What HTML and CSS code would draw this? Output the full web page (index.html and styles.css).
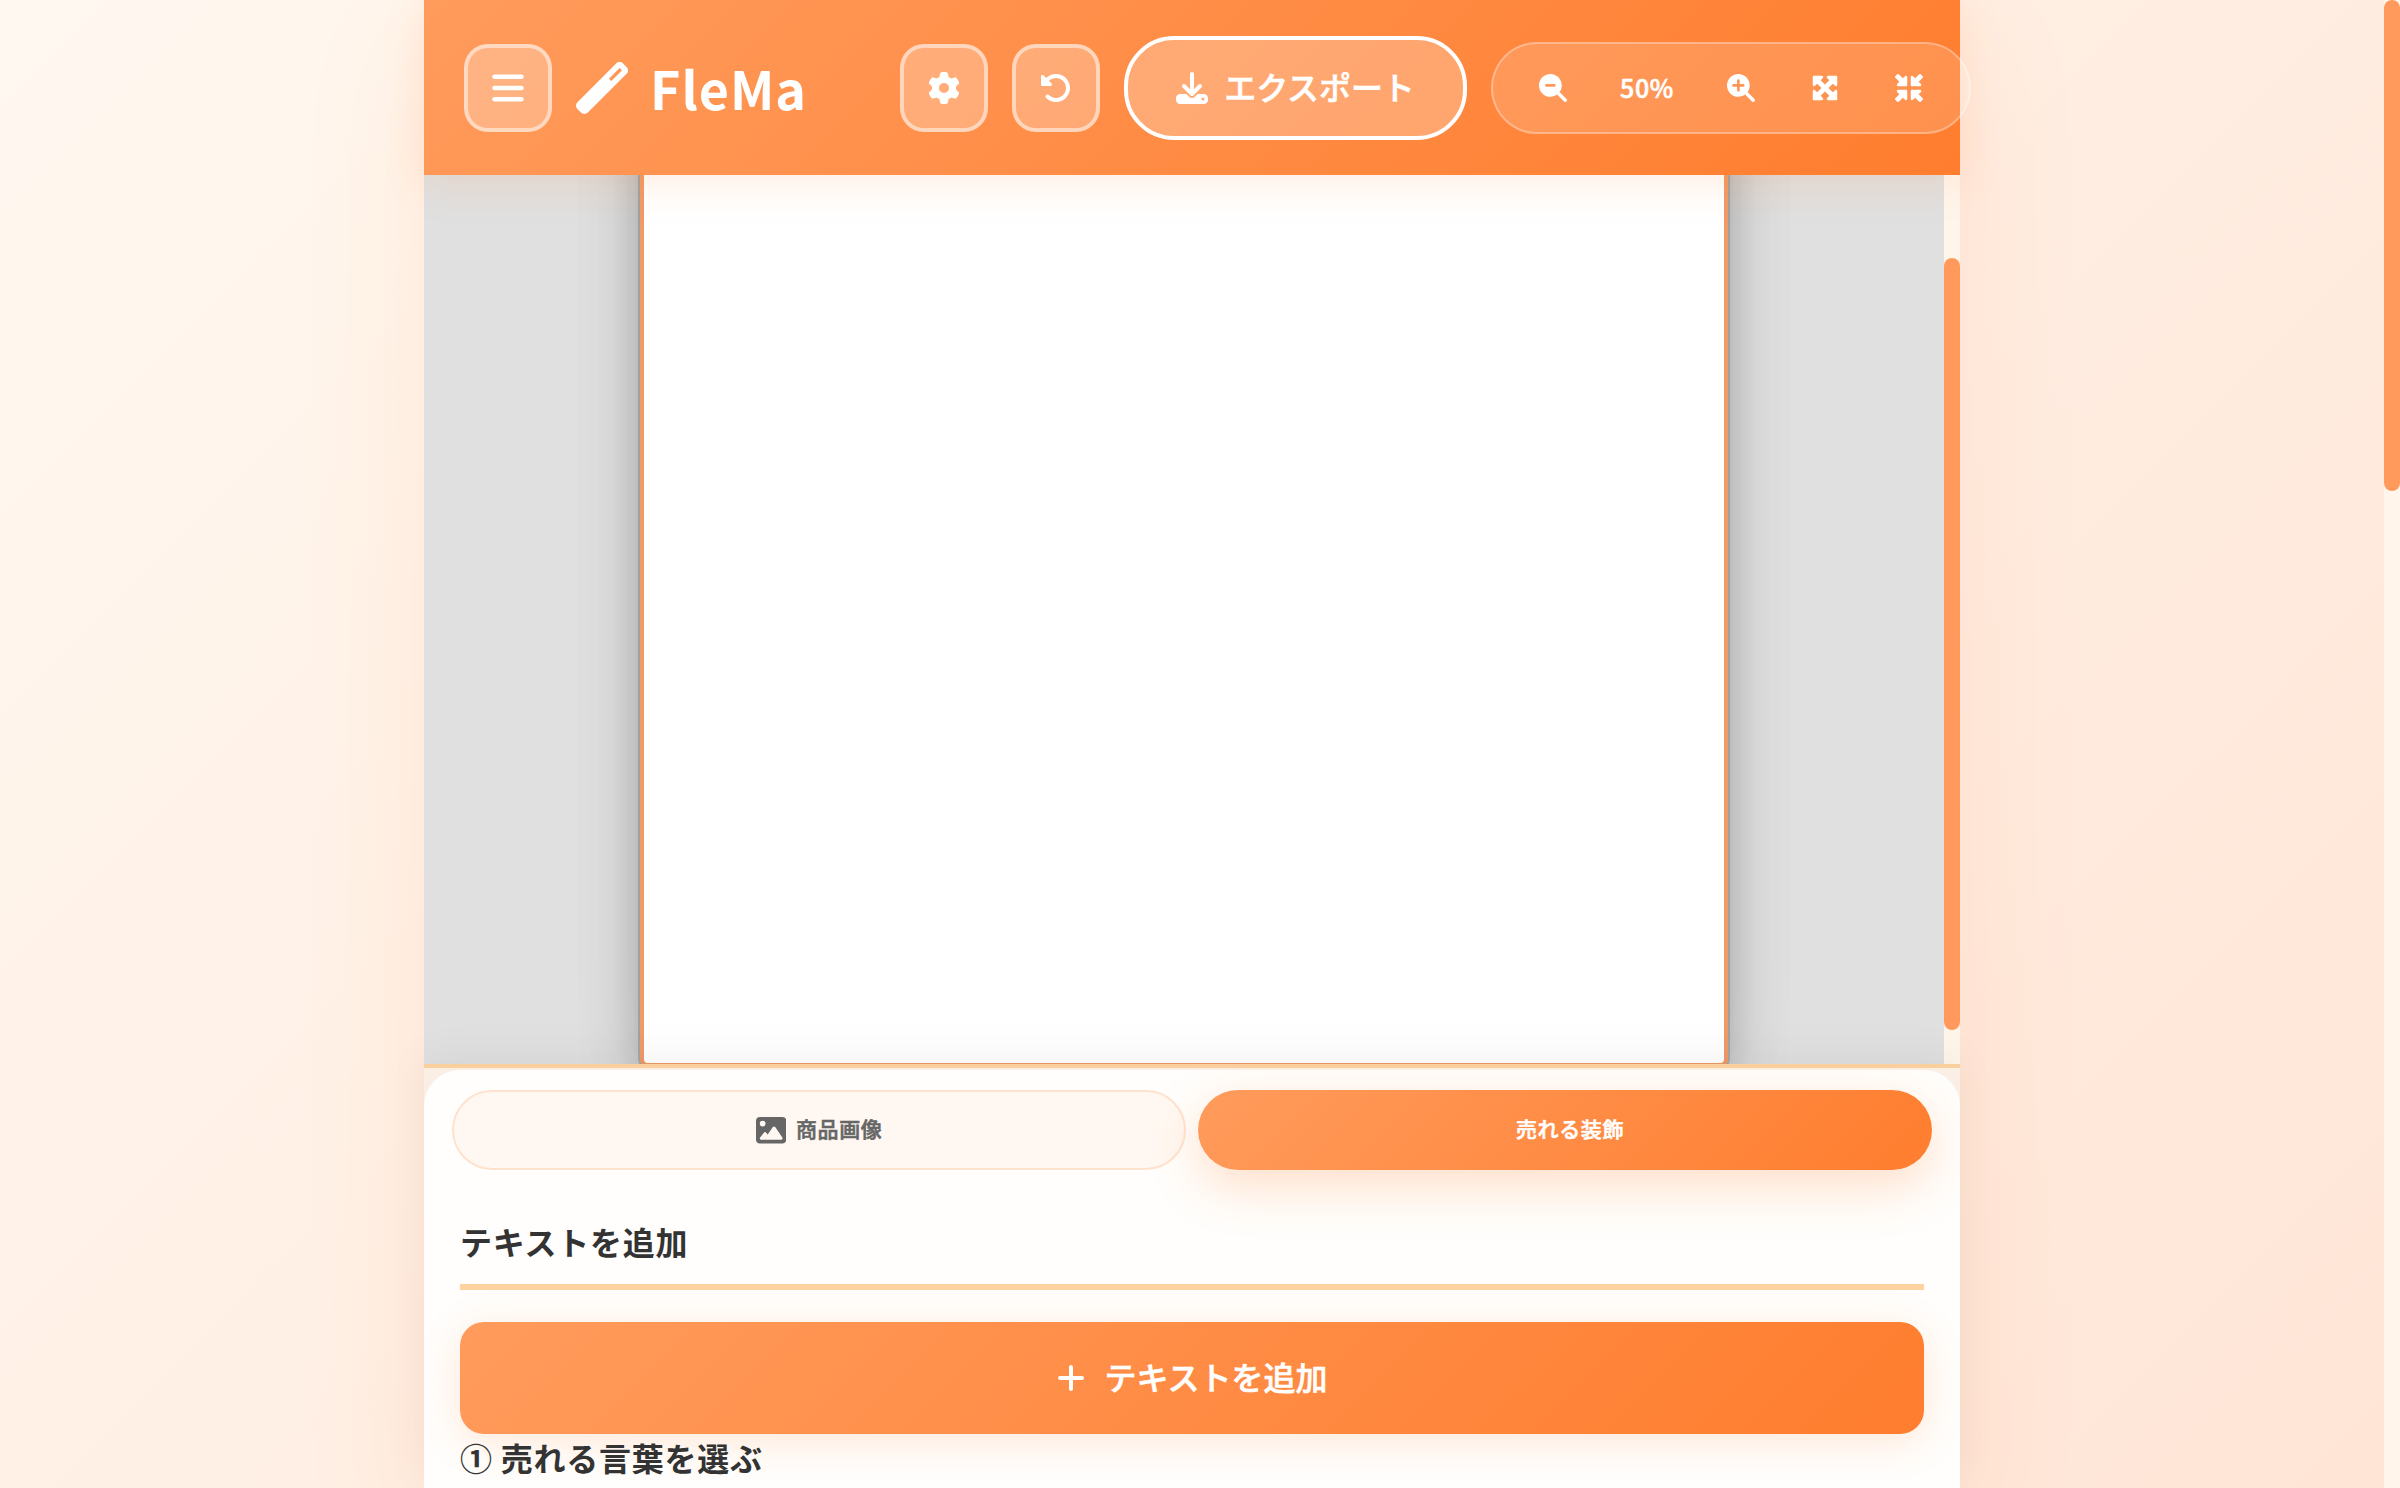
FILE: index.html
```html
<!DOCTYPE html>
<html lang="ja">
<head>
<meta charset="utf-8">
<title>FleMa</title>
<link rel="stylesheet" href="styles.css">
</head>
<body>
<div class="page">
  <div class="app">
    <header class="header">
      <button class="icon-btn" aria-label="メニュー"><svg class="icon icon-36" viewBox="0 0 448 512"><path d="M0 96C0 78.300 14.300 64 32 64H416c17.700 0 32 14.300 32 32s-14.300 32-32 32H32C14.300 128 0 113.700 0 96zM0 256c0-17.700 14.300-32 32-32H416c17.700 0 32 14.300 32 32s-14.300 32-32 32H32c-17.700 0-32-14.300-32-32zM448 416c0 17.700-14.300 32-32 32H32c-17.700 0-32-14.300-32-32s14.300-32 32-32H416c17.700 0 32 14.300 32 32z"/></svg></button>
      <div class="logo">
        <svg class="icon icon-52" viewBox="0 0 512 512"><path d="M14.100 463.300c-18.700-18.700-18.700-49.100 0-67.900L395.400 14.100c18.700-18.700 49.100-18.700 67.900 0l34.600 34.600c18.700 18.700 18.700 49.100 0 67.900L116.500 497.900c-18.700 18.700-49.100 18.700-67.900 0L14.100 463.300zM347.600 187.600l105-105L429.400 59.300l-105 105 23.300 23.300z"/></svg>
        <span class="logo-text">FleMa</span>
      </div>
      <button class="icon-btn" aria-label="設定"><svg class="icon icon-32" viewBox="0 0 512 512"><path d="M495.900 166.600c3.200 8.700 .5 18.400-6.400 24.600l-43.300 39.400c1.100 8.300 1.700 16.800 1.700 25.400s-.6 17.100-1.700 25.400l43.300 39.400c6.900 6.200 9.600 15.900 6.400 24.600c-4.400 11.900-9.700 23.300-15.800 34.300l-4.700 8.100c-6.600 11-14 21.400-22.100 31.200c-5.900 7.200-15.700 9.600-24.500 6.800l-55.700-17.700c-13.400 10.300-28.200 18.900-44 25.400l-12.500 57.100c-2 9.100-9 16.300-18.200 17.800c-13.800 2.300-28 3.500-42.500 3.500s-28.700-1.200-42.500-3.500c-9.200-1.500-16.200-8.700-18.200-17.800l-12.500-57.100c-15.800-6.500-30.600-15.100-44-25.400L83.100 425.900c-8.800 2.800-18.600 .3-24.500-6.800c-8.100-9.800-15.500-20.200-22.100-31.200l-4.700-8.100c-6.100-11-11.400-22.400-15.800-34.300c-3.200-8.700-.5-18.400 6.400-24.600l43.300-39.400C64.600 273.100 64 264.600 64 256s.6-17.100 1.700-25.400L22.400 191.200c-6.900-6.200-9.600-15.900-6.400-24.600c4.400-11.900 9.700-23.300 15.800-34.300l4.700-8.100c6.600-11 14-21.400 22.100-31.200c5.900-7.200 15.700-9.600 24.500-6.800l55.700 17.700c13.400-10.300 28.200-18.900 44-25.400l12.500-57.100c2-9.100 9-16.300 18.200-17.800C227.300 1.200 241.500 0 256 0s28.700 1.200 42.500 3.500c9.200 1.500 16.200 8.700 18.200 17.800l12.500 57.100c15.800 6.500 30.600 15.100 44 25.400l55.700-17.700c8.800-2.800 18.600-.3 24.500 6.800c8.100 9.800 15.500 20.200 22.100 31.200l4.700 8.100c6.100 11 11.400 22.400 15.800 34.300zM256 336a80 80 0 1 0 0-160 80 80 0 1 0 0 160z"/></svg></button>
      <button class="icon-btn" aria-label="リセット"><svg class="icon icon-32" viewBox="0 0 512 512"><path d="M48.500 224H40c-13.300 0-24-10.700-24-24V72c0-9.700 5.800-18.500 14.800-22.200s19.300-1.700 26.200 5.200L98.600 96.600c87.600-86.500 228.700-86.200 315.800 1c87.500 87.500 87.500 229.300 0 316.800s-229.300 87.500-316.800 0c-12.500-12.500-12.500-32.800 0-45.300s32.800-12.500 45.300 0c62.500 62.500 163.800 62.500 226.300 0s62.500-163.800 0-226.300c-62.200-62.200-162.700-62.500-225.300-1L185 183c6.900 6.900 8.900 17.200 5.200 26.200s-12.500 14.800-22.200 14.800H48.500z"/></svg></button>
      <button class="export-btn"><svg class="icon icon-32" viewBox="0 0 512 512"><path d="M288 32c0-17.700-14.300-32-32-32s-32 14.300-32 32V274.700l-73.400-73.400c-12.500-12.500-32.800-12.500-45.300 0s-12.500 32.800 0 45.300l128 128c12.500 12.500 32.800 12.500 45.300 0l128-128c12.500-12.500 12.500-32.800 0-45.300s-32.800-12.500-45.300 0L288 274.700V32zM64 352c-35.300 0-64 28.700-64 64v32c0 35.300 28.700 64 64 64H448c35.300 0 64-28.700 64-64V416c0-35.300-28.700-64-64-64H346.500l-45.300 45.300c-25 25-65.500 25-90.500 0L165.500 352H64zm368 56a24 24 0 1 1 0 48 24 24 0 1 1 0-48z"/></svg><span class="label">エクスポート</span></button>
      <div class="zoom">
        <button class="zoom-btn" aria-label="縮小"><svg class="icon icon-28" viewBox="0 0 512 512"><path d="M416 208c0 45.900-14.900 88.300-40 122.700L502.600 457.400c12.500 12.500 12.500 32.800 0 45.300s-32.800 12.500-45.300 0L330.700 376c-34.400 25.200-76.800 40-122.700 40C93.100 416 0 322.900 0 208S93.100 0 208 0S416 93.100 416 208zM136 184c-13.300 0-24 10.700-24 24s10.700 24 24 24H280c13.300 0 24-10.700 24-24s-10.700-24-24-24H136z"/></svg></button>
        <span class="zoom-value label">50%</span>
        <button class="zoom-btn" aria-label="拡大"><svg class="icon icon-28" viewBox="0 0 512 512"><path d="M416 208c0 45.900-14.900 88.300-40 122.700L502.600 457.400c12.500 12.500 12.500 32.800 0 45.300s-32.800 12.500-45.300 0L330.700 376c-34.400 25.200-76.800 40-122.700 40C93.100 416 0 322.900 0 208S93.100 0 208 0S416 93.100 416 208zM184 296c0 13.300 10.700 24 24 24s24-10.700 24-24V232h64c13.300 0 24-10.700 24-24s-10.700-24-24-24H232V120c0-13.300-10.700-24-24-24s-24 10.700-24 24v64H120c-13.300 0-24 10.700-24 24s10.700 24 24 24h64v64z"/></svg></button>
        <button class="zoom-btn" aria-label="全体表示"><svg class="icon icon-28" viewBox="0 0 512 512"><path d="M200 32H56C42.700 32 32 42.700 32 56V200c0 9.700 5.800 18.500 14.800 22.200s19.300 1.700 26.200-5.200l40-40 79 79-79 79L73 295c-6.900-6.900-17.200-8.900-26.200-5.200S32 302.300 32 312V456c0 13.300 10.700 24 24 24H200c9.700 0 18.500-5.800 22.200-14.800s1.700-19.300-5.200-26.200l-40-40 79-79 79 79-40 40c-6.900 6.900-8.900 17.200-5.200 26.200s12.500 14.800 22.200 14.800H456c13.300 0 24-10.700 24-24V312c0-9.700-5.800-18.500-14.800-22.200s-19.300-1.700-26.200 5.200l-40 40-79-79 79-79 40 40c6.900 6.900 17.200 8.900 26.200 5.200s14.800-12.500 14.800-22.200V56c0-13.300-10.700-24-24-24H312c-9.700 0-18.500 5.800-22.200 14.800s-1.700 19.300 5.200 26.200l40 40-79 79-79-79 40-40c6.900-6.900 8.900-17.200 5.200-26.200S209.700 32 200 32z"/></svg></button>
        <button class="zoom-btn" aria-label="元のサイズ"><svg class="icon icon-28" viewBox="0 0 512 512"><path d="M456 224H312c-13.300 0-24-10.700-24-24V56c0-9.700 5.800-18.500 14.800-22.200s19.300-1.700 26.200 5.200l40 40L442.300 5.700C446 2 450.900 0 456 0s10 2 13.700 5.700l36.700 36.700C510 46 512 50.900 512 56s-2 10-5.700 13.700L433 143l40 40c6.900 6.900 8.900 17.200 5.200 26.200s-12.500 14.800-22.200 14.800zm0 64c9.700 0 18.500 5.800 22.200 14.800s1.700 19.300-5.200 26.200l-40 40 73.400 73.400c3.600 3.600 5.700 8.500 5.700 13.700s-2 10-5.700 13.700l-36.700 36.700C466 510 461.100 512 456 512s-10-2-13.700-5.700L369 433l-40 40c-6.900 6.900-17.200 8.900-26.200 5.200s-14.800-12.500-14.800-22.200V312c0-13.300 10.700-24 24-24H456zm-256 0c13.300 0 24 10.700 24 24V456c0 9.700-5.800 18.500-14.800 22.200s-19.300 1.700-26.200-5.200l-40-40L69.700 506.300C66 510 61.100 512 56 512s-10-2-13.700-5.700L5.700 469.700C2 466 0 461.100 0 456s2-10 5.700-13.700L79 369 39 329c-6.900-6.900-8.900-17.200-5.200-26.200s12.500-14.800 22.200-14.800H200zM56 224c-9.700 0-18.500-5.800-22.200-14.800s-1.700-19.300 5.200-26.200l40-40L5.700 69.700C2 66 0 61.100 0 56s2-10 5.700-13.700L42.300 5.700C46 2 50.900 0 56 0s10 2 13.700 5.700L143 79l40-40c6.900-6.900 17.200-8.900 26.200-5.200s14.800 12.500 14.800 22.200V200c0 13.300-10.700 24-24 24H56z"/></svg></button>
      </div>
    </header>

    <main class="workspace">
      <div class="stage"><div class="paper"></div></div>
      <div class="stage-scroll"><div class="stage-thumb"></div></div>
    </main>

    <section class="dock">
      <div class="panel">
        <div class="tabs">
          <button class="tab"><svg class="icon icon-30" viewBox="0 0 512 512"><path d="M0 96C0 60.700 28.700 32 64 32H448c35.300 0 64 28.700 64 64V416c0 35.300-28.700 64-64 64H64c-35.300 0-64-28.700-64-64V96zM323.800 202.500c-4.500-6.600-11.900-10.500-19.800-10.500s-15.400 3.900-19.800 10.500l-87 127.600L170.700 297c-4.600-5.700-11.500-9-18.700-9s-14.200 3.300-18.700 9l-64 80c-5.800 7.200-6.900 17.100-2.900 25.400s12.400 13.600 21.600 13.600h96 32H424c8.900 0 17.100-4.900 21.200-12.800s3.600-17.400-1.400-24.700l-120-176zM112 192a48 48 0 1 0 0-96 48 48 0 1 0 0 96z"/></svg><span class="label">商品画像</span></button>
          <button class="tab tab-active"><span class="label">売れる装飾</span></button>
        </div>
        <div class="content">
          <h2 class="heading heading-ruled">テキストを追加</h2>
          <button class="add-btn"><svg class="icon icon-32 icon-plus" viewBox="0 0 448 512"><path d="M256 80c0-17.700-14.300-32-32-32s-32 14.300-32 32V224H48c-17.700 0-32 14.300-32 32s14.300 32 32 32H192V432c0 17.700 14.300 32 32 32s32-14.300 32-32V288H400c17.700 0 32-14.300 32-32s-14.300-32-32-32H256V80z"/></svg><span class="label">テキストを追加</span></button>
          <h2 class="heading">① 売れる言葉を選ぶ</h2>
        </div>
      </div>
    </section>
  </div>
  <div class="page-scroll"><div class="page-thumb"></div></div>
</div>
</body>
</html>
```
FILE: styles.css
```css
* { box-sizing: border-box; }

body {
  margin: 0;
  height: 1488px;
  overflow: hidden;
  font-family: "Noto Sans CJK JP", sans-serif;
  color: #333;
  letter-spacing: 0.64px;
}

button {
  margin: 0;
  padding: 0;
  border: 0;
  background: none;
  font: inherit;
  letter-spacing: inherit;
  color: inherit;
}

.page {
  display: flex;
  height: 1488px;
  padding-left: 424px;
  background: linear-gradient(135deg, #fff8f0 0%, #ffe5d6 100%);
}

.app {
  display: flex;
  flex-direction: column;
  width: 1536px;
  height: 1488px;
  background: #fff5eb;
  box-shadow: 0 40px 120px rgba(255, 127, 48, 0.1);
}

.page-scroll {
  width: 16px;
  margin-left: auto;
  background: #fff5eb;
}

.page-thumb {
  height: 491px;
  border-radius: 8px;
  background: #ff9a5c;
}

.icon { display: block; flex: none; fill: currentColor; }
.icon-28 { height: 28px; width: 28px; }
.icon-30 { height: 30.4px; width: 30.4px; }
.icon-32 { height: 32px; width: 32px; }
.icon-36 { height: 36px; width: 32px; }
.icon-52 { height: 52px; width: 52px; }
.icon-plus { width: 28px; }

/* semibold: the medium cut thickened by a thin outline */
.label {
  margin-top: -5px;
  font-weight: 500;
  -webkit-text-stroke: 0.6px currentColor;
}

/* header */
.header {
  position: relative;
  z-index: 2;
  display: flex;
  flex: none;
  align-items: center;
  gap: 24px;
  height: 175px;
  padding: 1px 0 0 40px;
  background: linear-gradient(135deg, #ff9b5c 0%, #ff7d2e 100%);
  box-shadow: 0 8px 40px rgba(255, 127, 48, 0.15);
  color: #fff;
}

.icon-btn {
  display: flex;
  flex: none;
  align-items: center;
  justify-content: center;
  width: 88px;
  height: 88px;
  border: 4px solid rgba(255, 255, 255, 0.5);
  border-radius: 24px;
  background: rgba(255, 255, 255, 0.25);
}

.logo {
  display: flex;
  flex: none;
  align-items: center;
  gap: 22px;
  width: 300px;
}

.logo-text {
  font-size: 52px;
  font-weight: 700;
  line-height: 60px;
  letter-spacing: 1px;
}

.export-btn {
  display: flex;
  flex: none;
  align-items: center;
  justify-content: center;
  gap: 16px;
  width: 343px;
  height: 104px;
  border: 4px solid #fff;
  border-radius: 50px;
  background: rgba(255, 255, 255, 0.25);
  font-size: 32px;
  letter-spacing: -0.1px;
}

.zoom {
  display: flex;
  flex: none;
  align-items: center;
  justify-content: center;
  gap: 16px;
  width: 480px;
  height: 92px;
  border: 2px solid rgba(255, 255, 255, 0.3);
  border-radius: 50px;
  background: rgba(255, 255, 255, 0.15);
}

.zoom-btn {
  display: flex;
  align-items: center;
  justify-content: center;
  width: 68px;
  height: 68px;
}

.zoom-value {
  width: 88px;
  margin-top: -2px;
  text-align: center;
  font-size: 25px;
}

/* canvas area */
.workspace {
  display: flex;
  flex: none;
  height: 889px;
}

.stage {
  display: flex;
  align-items: flex-end;
  justify-content: center;
  width: 1520px;
  overflow: hidden;
  background: #e0e0e0;
}

.paper {
  flex: none;
  width: 1088px;
  height: 1088px;
  margin-bottom: -3px;
  border: 4px solid #f09a66;
  border-radius: 8px;
  background: #fff;
  box-shadow: 0 0 0 2px rgba(0, 0, 0, 0.15), 0 16px 64px rgba(0, 0, 0, 0.18), 0 8px 32px rgba(0, 0, 0, 0.12), 0 0 100px rgba(0, 0, 0, 0.04);
}

.stage-scroll {
  width: 16px;
  padding-top: 83px;
  background: #fff5eb;
}

.stage-thumb {
  height: 772px;
  border-radius: 8px;
  background: #ff9a5c;
}

/* bottom panel */
.dock {
  position: relative;
  z-index: 1;
  flex: 1;
  min-height: 0;
  padding-top: 2px;
  border-top: 4px solid #facf9e;
  background: #fbeee4;
  box-shadow: 0 -8px 40px rgba(0, 0, 0, 0.05);
}

.panel {
  height: 418px;
  padding: 20px 28px 0;
  overflow: hidden;
  border-radius: 36px 36px 0 0;
  background: #fffefc;
}

.tabs {
  display: grid;
  grid-template-columns: 1fr 1fr;
  gap: 12px;
}

.tab {
  display: flex;
  align-items: center;
  justify-content: center;
  gap: 10px;
  height: 80px;
  border: 2px solid #ffe2ce;
  border-radius: 40px;
  background: #fff8f2;
  color: #666;
  font-size: 21px;
}

.tab-active {
  padding-left: 10px;
  border: 0;
  background: linear-gradient(135deg, #ff9b5c 0%, #ff7d2e 100%);
  box-shadow: 0 16px 50px rgba(255, 127, 48, 0.25);
  color: #fff;
}

.content {
  padding: 48px 8px 0;
}

.heading {
  margin: 0;
  font-size: 32px;
  font-weight: 700;
  line-height: 47px;
  letter-spacing: 0.75px;
}

.heading-ruled {
  height: 72px;
  margin-bottom: 32px;
  border-bottom: 6px solid #ffd3a0;
}

.add-btn {
  display: flex;
  align-items: center;
  justify-content: center;
  gap: 19px;
  width: 100%;
  height: 112px;
  padding-left: 1px;
  border-radius: 24px;
  background: linear-gradient(135deg, #ff9b5c 0%, #ff7d2e 100%);
  box-shadow: 0 8px 40px rgba(255, 127, 48, 0.18);
  color: #fff;
  font-size: 32px;
  letter-spacing: 0;
}
```
